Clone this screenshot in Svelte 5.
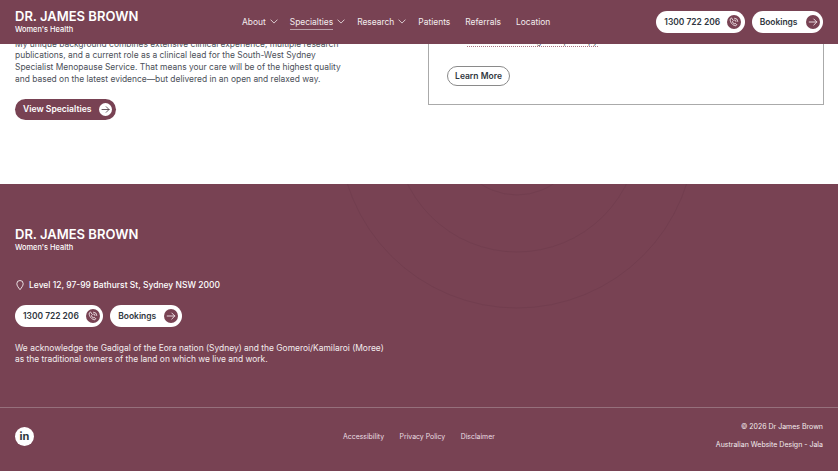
<script>
  const nav = [
    { label: 'About', caret: true },
    { label: 'Specialties', caret: true, active: true },
    { label: 'Research', caret: true },
    { label: 'Patients' },
    { label: 'Referrals' },
    { label: 'Location' }
  ];
  const legal = ['Accessibility', 'Privacy Policy', 'Disclaimer'];
</script>

{#snippet brand()}
  <div class="brand">
    <div class="brandName">DR. JAMES BROWN</div>
    <div class="brandSub">Women's Health</div>
  </div>
{/snippet}

{#snippet arrow()}
  <svg viewBox="0 0 14 14" width="14" height="14" fill="none" stroke="currentColor" stroke-width="0.9" stroke-linecap="round" stroke-linejoin="round">
    <path d="M3.2 7h7.6M7.8 4 10.8 7l-3 3" />
  </svg>
{/snippet}

{#snippet pills()}
  <div class="pills">
    <a class="pill phone" href="#top">
      <span>1300 722 206</span>
      <span class="pillIcon">
        <svg viewBox="0 0 14 14" width="14" height="14" fill="none" stroke="currentColor" stroke-width="0.9" stroke-linecap="round" stroke-linejoin="round">
          <path d="M4.2 3.2 3.2 4.1c-.5 2.9 2.6 6.6 5.6 6.7l1-1.1-1.7-1.4-.9.6c-.8-.5-1.4-1.2-1.8-2.2l.7-.8z" />
          <path d="M7.6 3.2a3.2 3.2 0 0 1 3.2 3.2M7.6 5a1.4 1.4 0 0 1 1.4 1.4" />
        </svg>
      </span>
    </a>
    <a class="pill" href="#top">
      <span>Bookings</span>
      <span class="pillIcon">{@render arrow()}</span>
    </a>
  </div>
{/snippet}

<div class="page" id="top">
  <header class="header">
    {@render brand()}
    <nav class="nav">
      {#each nav as item}
        <a class="navItem" class:hasCaret={item.caret} href="#top">
          <span class:active={item.active}>{item.label}</span>
          {#if item.caret}
            <svg viewBox="0 0 10 6" width="8" height="5" fill="none" stroke="currentColor" stroke-width="1" stroke-linecap="round" stroke-linejoin="round">
              <path d="M1 1l4 4 4-4" />
            </svg>
          {/if}
        </a>
      {/each}
    </nav>
    {@render pills()}
  </header>

  <main class="main">
    <div class="columns">
      <section class="intro">
        <p>
          My unique background combines extensive clinical experience, multiple research
          publications, and a current role as a clinical lead for the South-West Sydney
          Specialist Menopause Service. That means your care will be of the highest quality
          and based on the latest evidence—but delivered in an open and relaxed way.
        </p>
        <a class="viewBtn" href="#top">
          <span>View Specialties</span>
          <span class="viewIcon">{@render arrow()}</span>
        </a>
      </section>

      <section class="card">
        <div class="cardLink"><a href="#top">Cervical screening &amp; colposcopy</a></div>
        <a class="learnBtn" href="#top">Learn More</a>
      </section>
    </div>
  </main>

  <footer class="footer">
    <svg class="rings" viewBox="0 0 838 287" width="838" height="287" fill="none" stroke="#723e4f" stroke-width="1" aria-hidden="true">
      <circle cx="517" cy="-54" r="65" />
      <circle cx="517" cy="-54" r="122" />
      <circle cx="517" cy="-54" r="178" />
    </svg>
    <div class="footerTop">
      {@render brand()}
      <div class="address">
        <svg viewBox="0 0 12 14" width="10" height="12" fill="none" stroke="currentColor" stroke-width="1" stroke-linejoin="round">
          <path d="M6 12.6C4 10 2.2 7.8 2.2 5.4a3.8 3.8 0 0 1 7.6 0c0 2.4-1.8 4.6-3.8 7.2z" />
        </svg>
        <span>Level 12, 97-99 Bathurst St, Sydney NSW 2000</span>
      </div>
      {@render pills()}
      <p class="ack">
        We acknowledge the Gadigal of the Eora nation (Sydney) and the Gomeroi/Kamilaroi (Moree)<br />
        as the traditional owners of the land on which we live and work.
      </p>
    </div>

    <div class="footerBottom">
      <a class="social" href="#top" aria-label="LinkedIn">in</a>
      <div class="legal">
        {#each legal as item}
          <a href="#top">{item}</a>
        {/each}
      </div>
      <div class="credits">
        <div>© 2026 Dr James Brown</div>
        <div>Australian Website Design - Jala</div>
      </div>
    </div>
  </footer>
</div>

<style>
  :global(body) { background: #fff; }

  .page {
    position: relative;
    width: 838px;
    height: 471px;
    overflow: hidden;
    font-family: Inter, "Liberation Sans", sans-serif;
    color: #2f3640;
  }
  a { color: inherit; text-decoration: none; }
  p { margin: 0; }

  /* sticky header sits over the scrolled page */
  .header {
    position: absolute;
    top: 0;
    left: 0;
    right: 0;
    z-index: 2;
    height: 43.5px;
    box-sizing: border-box;
    padding: 0 15px;
    display: flex;
    align-items: center;
    background: #784253;
    color: #fff;
  }
  .brand { line-height: 1; width: 123px; }
  .brandName { font-size: 13px; font-weight: 600; line-height: 15px; white-space: nowrap; }
  .brandSub { font-size: 7.4px; font-weight: 500; line-height: 10px; margin-top: 1px; margin-bottom: -1px; }

  .nav { display: flex; gap: 15px; margin-left: 104px; font-size: 8.43px; }
  .navItem { display: flex; align-items: center; gap: 4px; color: #f3ecee; }
  .navItem.hasCaret { margin-right: -3px; }
  .navItem .active { padding-bottom: 2px; border-bottom: 1px solid #b9a0a9; margin-top: 3px; }

  .pills { display: flex; gap: 7px; }
  .header .pills { margin-left: auto; }
  .pill {
    height: 21.5px;
    box-sizing: border-box;
    padding: 0 3.5px 0 8px;
    display: flex;
    align-items: center;
    gap: 8px;
    border-radius: 11px;
    background: #fff;
    color: #2f3640;
    font-size: 8.43px;
    font-weight: 600;
  }
  .pill.phone { gap: 7px; }
  .pillIcon {
    width: 14px;
    height: 14px;
    border-radius: 50%;
    background: #784253;
    color: #f4e9ec;
    display: flex;
  }

  .main { height: 184px; overflow: hidden; background: #fff; }
  .columns {
    display: grid;
    grid-template-columns: 413px 396px;
    padding-left: 15px;
    margin-top: -20px;
  }
  .intro { padding-top: 58.5px; }
  .intro p { width: 340px; font-size: 8.44px; line-height: 11.7px; color: #4b5059; }
  .viewBtn {
    margin-top: 13.5px;
    width: 101px;
    height: 21px;
    box-sizing: border-box;
    padding: 0 4.5px 0 8px;
    display: flex;
    align-items: center;
    justify-content: space-between;
    border-radius: 11px;
    background: #784253;
    color: #fff;
    font-size: 8.6px;
    font-weight: 600;
  }
  .viewIcon {
    width: 13px;
    height: 13px;
    border-radius: 50%;
    background: #fff;
    color: #4a3a42;
    display: flex;
  }
  .viewIcon svg { width: 13px; height: 13px; }

  .card {
    height: 125px;
    box-sizing: border-box;
    border: 1px solid #aaa;
    padding: 54px 18px 0;
  }
  .cardLink { padding-left: 20px; font-size: 8.43px; line-height: 12px; color: #4b5059; }
  .cardLink a { border-bottom: 1px dotted #a8737f; }
  .learnBtn {
    margin-top: 19px;
    width: 63px;
    height: 20px;
    box-sizing: border-box;
    display: flex;
    align-items: center;
    justify-content: center;
    border: 1px solid #8a8a8a;
    border-radius: 10px;
    font-size: 8.5px;
    font-weight: 600;
  }

  .footer {
    position: relative;
    height: 287px;
    background: #784253;
    color: #fff;
    overflow: hidden;
  }
  .rings { position: absolute; inset: 0; }
  .footerTop { position: relative; height: 223px; box-sizing: border-box; padding: 43px 15px 0; }
  .address {
    margin-top: 27px;
    display: flex;
    align-items: center;
    gap: 4px;
    font-size: 8.5px;
    font-weight: 500;
  }
  .footerTop .pills { margin-top: 14px; }
  .ack { margin-top: 16px; font-size: 8.43px; line-height: 11.7px; color: #f3ecee; }

  .footerBottom {
    position: relative;
    height: 64px;
    box-sizing: border-box;
    border-top: 1px solid #96707c;
    padding: 0 15px 7px;
    display: flex;
    align-items: center;
  }
  .social {
    width: 19px;
    height: 19px;
    border-radius: 50%;
    background: #fff;
    color: #2f3640;
    font-size: 11px;
    font-weight: 700;
    display: flex;
    align-items: center;
    justify-content: center;
  }
  .legal { display: flex; gap: 15.5px; margin-left: 309px; font-size: 6.9px; color: #eadfe3; }
  .credits { margin-left: auto; text-align: right; font-size: 7px; line-height: 10px; color: #f3ecee; }
  .credits div + div { margin-top: 7.5px; }
</style>
